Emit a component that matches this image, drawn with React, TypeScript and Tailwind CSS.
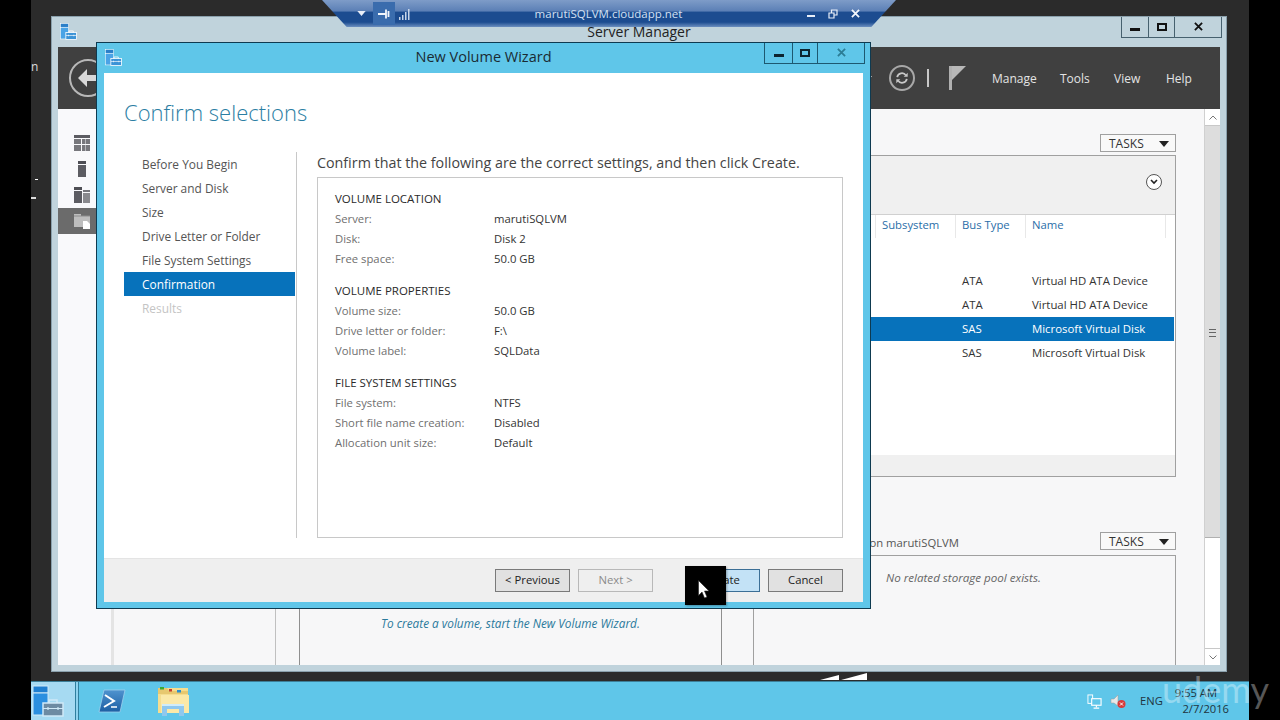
import React from "react";

function ServerIcon({ large = false, className = "" }: { large?: boolean; className?: string }) {
  const fill = large ? "#1f7fd0" : "#2a7fc9";
  const line = large ? "#cfe9f7" : "#ffffff";
  const brief = large ? "#6d8ba3" : "#3c93d6";
  return (
    <svg viewBox="0 0 32 32" className={className}>
      <rect x="1" y="1" width="15" height="7" fill={fill} stroke={line} strokeWidth="1" />
      <rect x="1" y="8" width="15" height="22" fill={large ? "#2a8fe0" : "#4aa3e6"} stroke={line} strokeWidth="1" />
      <rect x="11" y="18" width="20" height="13" fill={brief} stroke={line} strokeWidth="1.5" />
      <path d="M17 18v-3h8v3" fill="none" stroke={line} strokeWidth="1.5" />
      <path d="M11 23.5h20M16 22v3M26 22v3" stroke={line} strokeWidth="1.2" fill="none" />
    </svg>
  );
}

function TitleButtons({ wide, bar, box, closeColor, border }: { wide: number[]; bar: string; box: string; closeColor: string; border: string }) {
  return (
    <div className={`flex h-[21px] border-b border-l border-r ${border}`}>
      <div className={`flex items-center justify-center border-r ${border}`} style={{ width: wide[0] }}>
        <div className={`mt-[5px] h-[3px] w-[10px] ${bar}`} />
      </div>
      <div className={`flex items-center justify-center border-r ${border}`} style={{ width: wide[1] }}>
        <div className={`-mt-[1px] h-[8px] w-[10px] border-2 ${box}`} />
      </div>
      <div className={`flex items-center justify-center pb-[2px] ${closeColor}`} style={{ width: wide[2] }}>
        <svg viewBox="0 0 10 10" className="h-[9px] w-[9px]">
          <path d="M1 1l8 8M9 1l-8 8" stroke="currentColor" strokeWidth="2" />
        </svg>
      </div>
    </div>
  );
}

function Tasks() {
  return (
    <div className="flex h-[18px] w-[76px] items-center justify-between border border-[#a0a0a0] bg-[#f9f9f9] pl-[8px] pr-[6px] pt-[1px] text-[12px] text-[#333]">
      <span>TASKS</span>
      <svg viewBox="0 0 10 6" className="h-[6px] w-[10px]">
        <path d="M0 0h10L5 6z" fill="#222" />
      </svg>
    </div>
  );
}

function NavIcons() {
  return (
    <div className="flex h-full w-[56px] flex-col border-r-[3px] border-[#e4e4e4] bg-[#f9f9fb] pt-[21px]">
      <div className="flex h-[26px] items-center justify-center pr-[5px]">
        <svg viewBox="0 0 16 16" className="h-[16px] w-[16px]">
          <rect width="16" height="3" fill="#5c5c62" />
          <rect y="4" width="7" height="5" fill="#77777c" />
          <rect x="8" y="4" width="3.5" height="5" fill="#77777c" />
          <rect x="12" y="4" width="4" height="5" fill="#77777c" />
          <rect y="10" width="7" height="6" fill="#77777c" />
          <rect x="8" y="10" width="3.5" height="6" fill="#77777c" />
          <rect x="12" y="10" width="4" height="6" fill="#77777c" />
        </svg>
      </div>
      <div className="flex h-[26px] items-center justify-center pr-[5px]">
        <svg viewBox="0 0 8 16" className="h-[16px] w-[8px]">
          <rect width="8" height="3" fill="#4e4e54" />
          <rect y="4" width="8" height="12" fill="#5c5c62" />
        </svg>
      </div>
      <div className="flex h-[26px] items-center justify-center pr-[5px]">
        <svg viewBox="0 0 16 16" className="h-[16px] w-[16px]">
          <rect width="8" height="3" fill="#4e4e54" />
          <rect y="4" width="8" height="12" fill="#5c5c62" />
          <rect x="9" y="3" width="7" height="2" fill="#77777c" />
          <rect x="9" y="6" width="7" height="10" fill="#8a8a8e" />
        </svg>
      </div>
      <div className="flex h-[26px] items-center justify-center bg-[#6b6b6b] pr-[5px]">
        <svg viewBox="0 0 16 16" className="h-[16px] w-[16px]">
          <path d="M0 1h7v2h9v11H0z" fill="#bdbdbd" />
          <path d="M0 3h16" stroke="#8c8c8c" strokeWidth="1" />
          <path d="M9 8h4l3 3v5H9z" fill="#ffffff" />
        </svg>
      </div>
    </div>
  );
}

function Scrollbar() {
  return (
    <div className="flex h-full w-[16px] flex-col border-l border-[#d0d0d0] bg-white">
      <div className="flex h-[17px] items-center justify-center border-b border-[#c8c8c8]">
        <svg viewBox="0 0 8 5" className="h-[5px] w-[8px]">
          <path d="M0.5 4.5L4 1l3.5 3.5" stroke="#777" fill="none" />
        </svg>
      </div>
      <div className="flex h-[412px] items-center justify-center border-b border-[#b0b0b0] bg-[#dddddd] pt-[2px]">
        <div className="h-[8px] w-[7px] border-y border-[#666] bg-[linear-gradient(#dddddd_33%,#666_33%,#666_50%,#dddddd_50%)]" />
      </div>
      <div className="flex-1" />
      <div className="flex h-[17px] items-center justify-center border-t border-[#c8c8c8]">
        <svg viewBox="0 0 8 5" className="h-[5px] w-[8px]">
          <path d="M0.5 0.5L4 4l3.5-3.5" stroke="#777" fill="none" />
        </svg>
      </div>
    </div>
  );
}

function DiskRow({ bus, name, selected = false }: { bus: string; name: string; selected?: boolean }) {
  return (
    <div className={`flex h-[24px] items-center text-[11.4px] ${selected ? "mr-[1px] bg-[#0772bb] text-white" : "text-[#333]"}`}>
      <div className="w-[84px]" />
      <div className="w-[70px] pl-[7px]">{bus}</div>
      <div className="pl-[7px]">{name}</div>
    </div>
  );
}

function ServerManager() {
  return (
    <div className="absolute left-[20px] top-[16px] flex h-[656px] w-[1176px] flex-col border border-[#8aa0ac] bg-[#c0d3dc]">
      <div className="relative flex h-[30px] shrink-0 justify-center">
        <ServerIcon className="absolute left-[8px] top-[6px] h-[17px] w-[17px]" />
        <span className="pt-[4px] text-[14px] text-[#222]">Server Manager</span>
        <div className="absolute right-[4px] top-0">
          <TitleButtons wide={[27, 26, 46]} bar="bg-[#111]" box="border-[#111]" closeColor="text-[#111]" border="border-[#46606e]" />
        </div>
      </div>
      <div className="mx-[6px] flex h-[62px] shrink-0 items-center bg-[#404040] text-[#e4e4e4]">
        <div className="ml-[11px] flex h-[38px] w-[38px] items-center justify-center rounded-full border-2 border-[#b8b8b8]">
          <svg viewBox="0 0 24 20" className="h-[20px] w-[24px]">
            <path d="M11 1L2 10l9 9v-6h11V7H11z" fill="#d8d8d8" />
          </svg>
        </div>
        <div className="flex-1" />
        <svg viewBox="0 0 8 5" className="mr-[17px] h-[5px] w-[8px]">
          <path d="M0 0h8L4 5z" fill="#eee" />
        </svg>
        <div className="flex h-[26px] w-[26px] items-center justify-center rounded-full border-2 border-[#a8a8a8]">
          <svg viewBox="0 0 16 16" className="h-[14px] w-[14px]">
            <path d="M2.5 7a5.5 5.5 0 0 1 10-2M13.5 9a5.5 5.5 0 0 1-10 2" stroke="#c8c8c8" strokeWidth="2" fill="none" />
            <path d="M14.5 2v4.5H10zM1.5 14V9.500H6z" fill="#c8c8c8" />
          </svg>
        </div>
        <div className="ml-[12px] h-[18px] w-[2px] bg-[#c8c8c8]" />
        <svg viewBox="0 0 17 24" className="ml-[20px] h-[24px] w-[17px]">
          <rect width="3" height="24" fill="#b0b0b0" />
          <path d="M3 0h14L3 14z" fill="#b8b8b8" />
        </svg>
        <div className="ml-[26px] flex items-center pt-[2px] text-[12px]">
          <span className="w-[68px]">Manage</span>
          <span className="w-[54px]">Tools</span>
          <span className="w-[52px]">View</span>
          <span className="w-[42px]">Help</span>
        </div>
        <div className="w-[12px]" />
      </div>
      <div className="mx-[6px] flex min-h-0 flex-1 bg-[#f7f7f8] text-[12px]">
        <NavIcons />
        <div className="flex min-w-0 flex-1 flex-col pr-[28px] pt-[25px]">
          <div className="flex justify-end">
            <Tasks />
          </div>
          <div className="ml-[185px] mt-[3px] flex h-[322px] flex-col border border-[#a0a0a0] bg-[#f0f0f0]">
            <div className="flex h-[58px] items-center justify-end pb-[6px] pr-[13px]">
              <div className="flex h-[16px] w-[16px] items-center justify-center rounded-full border border-[#555] bg-white">
                <svg viewBox="0 0 8 6" className="h-[6px] w-[8px]">
                  <path d="M1 1l3 3 3-3" stroke="#222" strokeWidth="1.6" fill="none" />
                </svg>
              </div>
            </div>
            <div className="flex h-[241px] flex-col items-stretch bg-white">
              <div className="flex h-[24px] shrink-0 justify-end border-t border-[#d0d0d0] text-[11.3px] text-[#2a6ea8]">
                <div className="flex w-full justify-end">
                  <div className="h-full w-[80px] border-l border-[#e8e8e8] pl-[6px] pt-[2px]">Subsystem</div>
                  <div className="h-full w-[70px] border-l border-[#e8e8e8] pl-[6px] pt-[2px]">Bus Type</div>
                  <div className="h-full w-[140px] border-l border-[#e8e8e8] pl-[6px] pt-[2px]">Name</div>
                  <div className="h-full w-[10px] border-l border-[#e8e8e8]" />
                </div>
              </div>
              <div className="h-[31px] shrink-0" />
              <div className="ml-auto w-[304px]">
                <DiskRow bus="ATA" name="Virtual HD ATA Device" />
                <DiskRow bus="ATA" name="Virtual HD ATA Device" />
                <DiskRow bus="SAS" name="Microsoft Virtual Disk" selected />
                <DiskRow bus="SAS" name="Microsoft Virtual Disk" />
              </div>
            </div>
          </div>
          <div className="mt-[54px] flex flex-1 items-stretch">
            <div className="mt-[21px] w-[162px] border-r border-[#c0c0c0]" />
            <div className="ml-[23px] mt-[21px] flex w-[423px] items-center justify-center border-x border-t border-[#8f8f8f] pt-[29px] text-[11.8px] text-[#2b7a9c] italic">
              To create a volume, start the New Volume Wizard.
            </div>
            <div className="ml-[31px] flex min-w-0 flex-1 flex-col">
              <div className="flex items-center justify-end">
                <span className="mr-[141px] pt-[4px] text-[11.3px] text-[#555]">on marutiSQLVM</span>
                <Tasks />
              </div>
              <div className="mt-[3px] flex-1 border-x border-t border-[#a0a0a0] pl-[132px] pt-[13px] text-[11.6px] text-[#666] italic">
                No related storage pool exists.
              </div>
            </div>
          </div>
        </div>
        <Scrollbar />
      </div>
      <div className="h-[6px] shrink-0" />
    </div>
  );
}

function StepItem({ label, state }: { label: string; state?: "active" | "disabled" }) {
  const s = state === "active" ? "bg-[#0772bb] text-white" : state === "disabled" ? "text-[#c4c4c4]" : "text-[#555]";
  return <div className={`flex h-[24px] items-center pl-[18px] pt-[2px] text-[11.9px] ${s}`}>{label}</div>;
}

function Section({ title, rows }: { title: string; rows: [string, string][] }) {
  return (
    <div className="mb-[12px]">
      <div className="flex h-[20px] items-center pt-[2px] text-[11.5px] text-[#2a2a2a]">{title}</div>
      {rows.map(([k, v]) => (
        <div key={k} className="flex h-[20px] items-center pt-[2px] text-[11.3px]">
          <span className="w-[159px] text-[#6f6f6f]">{k}</span>
          <span className="text-[#333]">{v}</span>
        </div>
      ))}
    </div>
  );
}

function WizButton({ label, kind }: { label: string; kind?: "disabled" | "default" }) {
  const s =
    kind === "disabled"
      ? "border-[#b8b8b8] bg-[#efefef] text-[#8a8a8a]"
      : kind === "default"
        ? "border-[#3c6f96] bg-[#c3e2f6] text-[#222]"
        : "border-[#7a7a7a] bg-[#e1e1e1] text-[#222]";
  return <div className={`flex h-[23px] w-[75px] items-center justify-center border text-[11.3px] ${s}`}>{label}</div>;
}

function Wizard() {
  return (
    <div className="absolute left-[65px] top-[42px] flex h-[567px] w-[775px] flex-col border border-[#0e3a50] bg-[#5fc6e9]">
      <div className="relative flex h-[30px] shrink-0 items-center justify-center pb-[2px] text-[14.5px] text-[#1a2b33]">
        <ServerIcon className="absolute left-[8px] top-[6px] h-[17px] w-[17px]" />
        <span>New Volume Wizard</span>
        <div className="absolute right-[5px] top-0">
          <TitleButtons wide={[28, 25, 46]} bar="bg-[#0c2530]" box="border-[#0c2530]" closeColor="text-[#2b7c95]" border="border-[#1d5870]" />
        </div>
      </div>
      <div className="mx-[7px] mb-[6px] flex min-h-0 flex-1 flex-col bg-white text-[12px]">
        <div className="flex min-h-0 flex-1 flex-col px-[20px]">
          <div className="flex h-[79px] shrink-0 items-start pt-[23px] text-[22px] font-light text-[#2b7ea3]">Confirm selections</div>
          <div className="flex h-[386px]">
            <div className="w-[171px] shrink-0">
              <StepItem label="Before You Begin" />
              <StepItem label="Server and Disk" />
              <StepItem label="Size" />
              <StepItem label="Drive Letter or Folder" />
              <StepItem label="File System Settings" />
              <StepItem label="Confirmation" state="active" />
              <StepItem label="Results" state="disabled" />
            </div>
            <div className="ml-[1px] w-[1px] bg-[#c8c8c8]" />
            <div className="flex min-w-0 flex-1 flex-col pl-[20px]">
              <div className="h-[25px] shrink-0 pt-[1px] text-[14.3px] leading-[20px] text-[#444]">Confirm that the following are the correct settings, and then click Create.</div>
              <div className="flex-1 border border-[#c8c8c8] pl-[17px] pt-[10px]">
                <Section title="VOLUME LOCATION" rows={[["Server:", "marutiSQLVM"], ["Disk:", "Disk 2"], ["Free space:", "50.0 GB"]]} />
                <Section title="VOLUME PROPERTIES" rows={[["Volume size:", "50.0 GB"], ["Drive letter or folder:", "F:\\"], ["Volume label:", "SQLData"]]} />
                <Section title="FILE SYSTEM SETTINGS" rows={[["File system:", "NTFS"], ["Short file name creation:", "Disabled"], ["Allocation unit size:", "Default"]]} />
              </div>
            </div>
          </div>
        </div>
        <div className="flex h-[44px] shrink-0 items-start justify-end border-t border-[#e4e4e4] bg-[#efefef] pr-[20px] pt-[10px]">
          <WizButton label="< Previous" />
          <div className="w-[8px]" />
          <WizButton label="Next >" kind="disabled" />
          <div className="w-[32px]" />
          <WizButton label="Create" kind="default" />
          <div className="w-[8px]" />
          <WizButton label="Cancel" />
        </div>
      </div>
    </div>
  );
}

function ConnectionBar() {
  return (
    <div className="absolute left-[291px] top-0 flex h-[27px] w-[574px] items-center bg-[linear-gradient(#7e9cc8_0%,#5c80b6_40%,#1c4c90_46%,#1c4c90_82%,#6c8fc0_100%)] text-[11.5px] text-[#d3e0f2] [clip-path:polygon(0_0,100%_0,95.7%_100%,4.3%_100%)]">
      <svg viewBox="0 0 10 6" className="ml-[35px] h-[5px] w-[9px]">
        <path d="M0 0h10L5 6z" fill="#e8eef8" />
      </svg>
      <div className="ml-[7px] flex h-[23px] w-[22px] items-center justify-center bg-[#3a6cad]">
        <svg viewBox="0 0 12 10" className="h-[10px] w-[12px]">
          <path d="M0 5h8M8 0.500v9M10.500 2v6" stroke="#f2f6fc" strokeWidth="1.8" />
        </svg>
      </div>
      <svg viewBox="0 0 12 12" className="ml-[3px] h-[12px] w-[12px]">
        <path d="M1 9h1.500v3H1zM4 7h1.500v5H4zM7 4h1.500v8H7zM10 1h1.500v11H10z" fill="#c8d6ea" />
      </svg>
      <div className="flex flex-1 justify-center">marutiSQLVM.cloudapp.net</div>
      <div className="mt-[5px] h-[2px] w-[8px] bg-[#e8eef8]" />
      <svg viewBox="0 0 10 10" className="ml-[13px] h-[10px] w-[10px]">
        <path d="M3.500 3.500V1h5.500v5H6.500M1 4h5v5H1z" stroke="#e8eef8" strokeWidth="1.200" fill="none" />
      </svg>
      <svg viewBox="0 0 10 10" className="ml-[13px] h-[9px] w-[9px]">
        <path d="M1 1l8 8M9 1l-8 8" stroke="#f2f6fc" strokeWidth="2" />
      </svg>
      <div className="w-[36px]" />
    </div>
  );
}

function Taskbar() {
  return (
    <div className="absolute bottom-0 left-0 flex h-[39px] w-[1218px] items-center border-t border-[#3d7f99] bg-[#5fc6e9] text-[12px] text-[#1f3440]">
      <div className="flex h-full w-[44px] items-center bg-[#a6daf2] pl-[1px]">
        <ServerIcon large className="h-[32px] w-[32px]" />
      </div>
      <div className="h-full w-[4px] border-x border-[#2f7f9f] bg-[#8fd2ee]" />
      <svg viewBox="0 0 28 24" className="ml-[19px] h-[24px] w-[28px]">
        <defs>
          <linearGradient id="ps" x1="0" x2="0" y1="0" y2="1">
            <stop offset="0" stopColor="#4f93cf" />
            <stop offset="1" stopColor="#1d5fa3" />
          </linearGradient>
        </defs>
        <path d="M6 1h21l-5 22H1z" fill="url(#ps)" stroke="#a0d0ee" strokeWidth="0.800" />
        <path d="M7 6l9 6-10 6" stroke="#fff" strokeWidth="2" fill="none" />
        <path d="M13 18h6" stroke="#fff" strokeWidth="1.500" />
      </svg>
      <svg viewBox="0 0 32 30" className="ml-[31px] h-[30px] w-[32px]">
        <path d="M1 2h30v25H1z" fill="#f5dd8f" />
        <path d="M1 2h9l2 3h19v3H1z" fill="#e7c86f" />
        <rect x="3" y="1" width="4" height="2.500" fill="#3aaa35" />
        <rect x="12" y="3" width="3" height="2.500" fill="#c8402e" />
        <rect x="20" y="4" width="4" height="2.500" fill="#2a8fd0" />
        <path d="M4 9h28v18H4z" fill="#fbe9a8" />
        <path d="M5 18h22v12h-5v-7H10v7H5z" fill="#8fc8ee" />
        <path d="M5 18h22v2H5z" fill="#d0ecfa" />
      </svg>
      <div className="flex-1" />
      <svg viewBox="0 0 16 16" className="mr-[8px] h-[15px] w-[15px]">
        <rect x="1" y="1" width="5" height="9" fill="none" stroke="#fff" strokeWidth="1" />
        <rect x="5" y="5" width="10" height="7" fill="#5fc6e9" stroke="#fff" strokeWidth="1.200" />
        <path d="M10 12v2M7 15h6" stroke="#fff" strokeWidth="1.200" />
      </svg>
      <svg viewBox="0 0 16 16" className="mr-[14px] h-[16px] w-[16px]">
        <path d="M1 6h3l4-4v11L4 10H1z" fill="#e8e8e8" stroke="#999" strokeWidth="0.500" />
        <circle cx="11.500" cy="11" r="4" fill="#d83a3a" />
        <path d="M10 9.500l3 3M13 9.500l-3 3" stroke="#fff" strokeWidth="1" />
      </svg>
      <span className="mr-[12px] text-[11.2px]">ENG</span>
      <div className="mr-[20px] flex flex-col items-end text-[11.2px] leading-[16px]">
        <span className="pr-[12px]">9:55 AM</span>
        <span>2/7/2016</span>
      </div>
    </div>
  );
}

export default function App() {
  return (
    <div className="relative h-[720px] w-[1280px] overflow-hidden bg-black font-['Open_Sans',sans-serif]">
      <div className="absolute left-[31px] top-0 h-[720px] w-[1218px] bg-[#2b2b2b]">
        <ServerManager />
        <Wizard />
        <ConnectionBar />
        <svg viewBox="0 0 47 7" className="absolute left-[789px] top-[673px] h-[7px] w-[47px]">
          <path d="M0 7L19 2v5zM21 7L47 0v7z" fill="#fff" />
        </svg>
        <Taskbar />
      </div>
      <span className="absolute left-[31px] top-[58px] text-[12px] text-[#ddd]">n</span>
      <div className="absolute left-[35px] top-[179px] h-[1px] w-[3px] bg-white" />
      <div className="absolute left-[31px] top-[197px] h-[2px] w-[5px] bg-[#ddd]" />
      <div className="absolute left-[685px] top-[566px] flex h-[39px] w-[41px] items-start bg-black pl-[13px] pt-[14px] shadow-[1px_1px_2px_rgba(0,0,0,0.3)]">
        <svg viewBox="0 0 11 19" className="h-[19px] w-[11px]">
          <path d="M0.500 0.500v15l3.500-3.500 2.500 6 2.500-1-2.500-6h4.500z" fill="#fff" stroke="#222" strokeWidth="0.600" />
        </svg>
      </div>
      <div className="pointer-events-none absolute left-[1162px] top-[665px] font-['Lato',sans-serif] text-[36px] leading-[48px] text-white/35">udemy</div>
    </div>
  );
}
